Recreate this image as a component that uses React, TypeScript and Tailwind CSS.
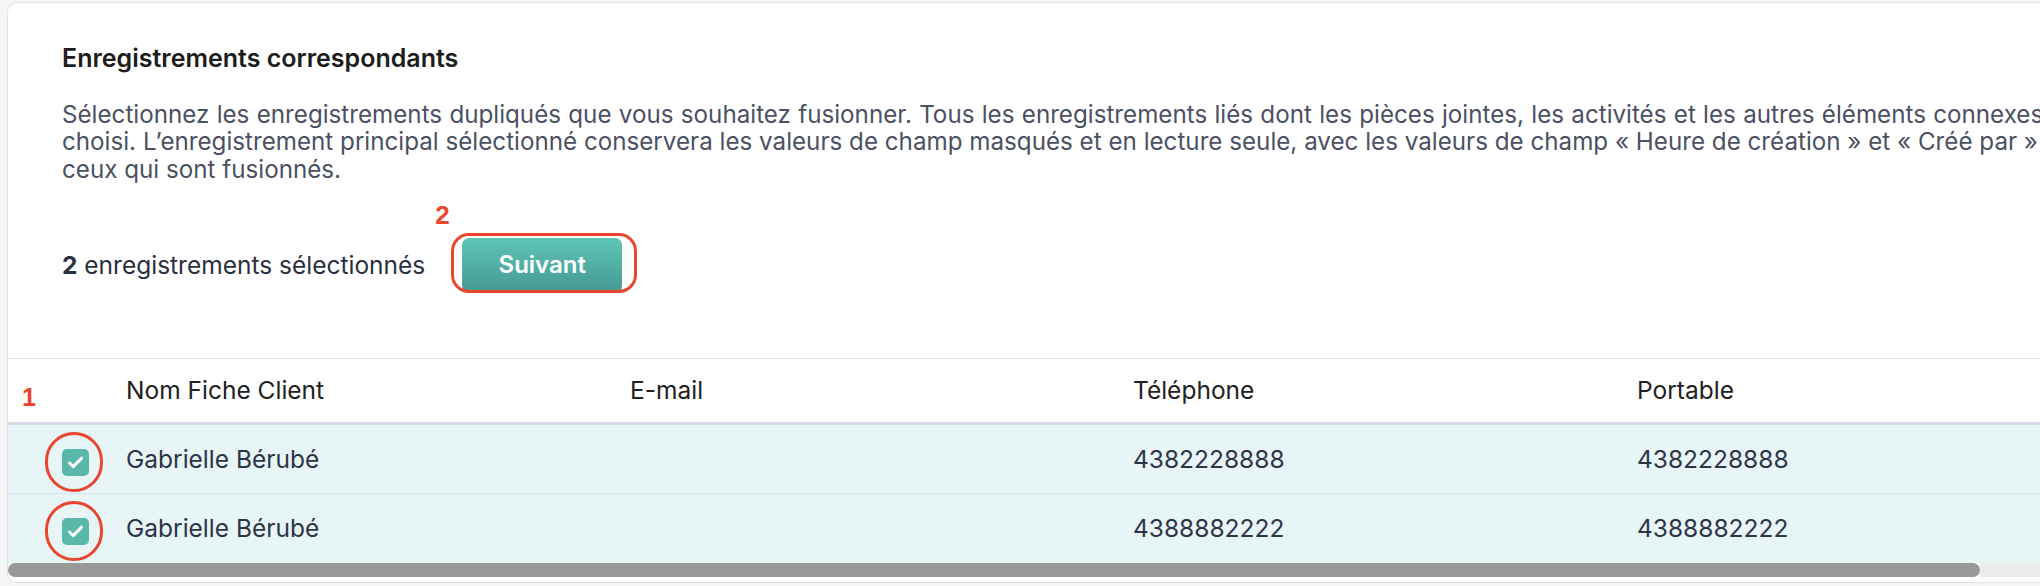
import React from "react";

const rows = [
  { name: "Gabrielle Bérubé", email: "", tel: "4382228888", mob: "4382228888" },
  { name: "Gabrielle Bérubé", email: "", tel: "4388882222", mob: "4388882222" },
];

function CheckBox() {
  return (
    <div className="flex h-[27px] w-[27px] items-center justify-center rounded-[5px] bg-[#59b8a9]">
      <svg width="27" height="27" viewBox="0 0 27 27" fill="none">
        <path d="M7.5 14 L11.2 17.6 L19.5 9.2" stroke="white" strokeWidth="3" strokeLinecap="round" strokeLinejoin="round" />
      </svg>
    </div>
  );
}

export default function App() {
  return (
    <div className="h-[586px] w-full overflow-hidden bg-[#f5f5f5] pl-[7px] pt-[2px] font-['Inter',sans-serif]">
      <div className="w-[2400px] overflow-hidden rounded-l-[10px] border border-[#e3e3e3] bg-white">
        {/* Header section */}
        <div className="pl-[54px] pt-[40px] pb-[67px]">
          <h2 className="text-[25px] leading-[30px] font-semibold text-[#1c1c1c]">Enregistrements correspondants</h2>
          <p className="mt-[27.5px] whitespace-nowrap text-[24.2px] leading-[27.5px] text-[#4b5163]">
            <span className="[word-spacing:0.5px]">
              Sélectionnez les enregistrements dupliqués que vous souhaitez fusionner. Tous les enregistrements liés dont les pièces jointes, les activités et les autres éléments connexes seront associés à l’enregistrement
            </span>
            <br />
            choisi. L’enregistrement principal sélectionné conservera les valeurs de champ masqués et en lecture seule, avec les valeurs de champ « Heure de création » et « Créé par »
            <br />
            ceux qui sont fusionnés.
          </p>
          <div className="mt-[55px] flex items-center">
            <span className="text-[24.5px] leading-[30px] text-[#2b3040]">
              <span className="font-bold">2</span> enregistrements sélectionnés
            </span>
            <div className="relative ml-[37px]">
              <span className="absolute left-[-27px] top-[-36px] font-['Liberation_Sans',sans-serif] text-[26px] leading-[26px] font-bold text-[#e8462e]">
                2
              </span>
              <div className="pointer-events-none absolute left-[-11px] top-[-5px] h-[60px] w-[186px] rounded-[18px] border-[3px] border-[#e8462e]" />
              <button className="flex h-[53px] w-[160px] items-center justify-center rounded-[7px] bg-gradient-to-b from-[#5fc6b6] to-[#469a94] text-[24px] font-semibold text-white shadow-[0_2px_0_#3b7b76]">
                Suivant
              </button>
            </div>
          </div>
        </div>

        {/* Table */}
        <div className="border-t border-[#dfe4ea]">
          <div className="grid h-[66px] grid-cols-[118px_504px_503px_504px_1fr] items-center border-b-[3px] border-[#d5dce6] text-[24.5px] text-[#212121]">
            <div className="relative h-full">
              <span className="absolute left-[14px] top-[26px] font-['Liberation_Sans',sans-serif] text-[25px] leading-[25px] font-bold text-[#e8462e]">
                1
              </span>
            </div>
            <div>Nom Fiche Client</div>
            <div>E-mail</div>
            <div>Téléphone</div>
            <div>Portable</div>
          </div>
          {rows.map((r, i) => (
            <div
              key={i}
              className={
                "grid h-[69px] grid-cols-[118px_504px_503px_504px_1fr] items-center bg-[#e7f5f7] text-[24.5px] text-[#2e3446] " +
                (i === 0 ? "border-b border-[#d3e6ea]" : "")
              }
            >
              <div className="relative flex h-full items-center pl-[54px] pt-[6px]">
                <CheckBox />
                <div className="pointer-events-none absolute left-[37px] top-[7px] h-[60px] w-[58px] rounded-full border-[3px] border-[#e8462e]" />
              </div>
              <div>{r.name}</div>
              <div>{r.email}</div>
              <div>{r.tel}</div>
              <div>{r.mob}</div>
            </div>
          ))}
          {/* Scrollbar */}
          <div className="flex h-[19px] items-start bg-white">
            <div className="h-[14px] w-[1972px] rounded-full bg-[#999999]" />
            <div className="h-[14px] flex-1 bg-[#ececec]" />
          </div>
        </div>
      </div>
    </div>
  );
}
